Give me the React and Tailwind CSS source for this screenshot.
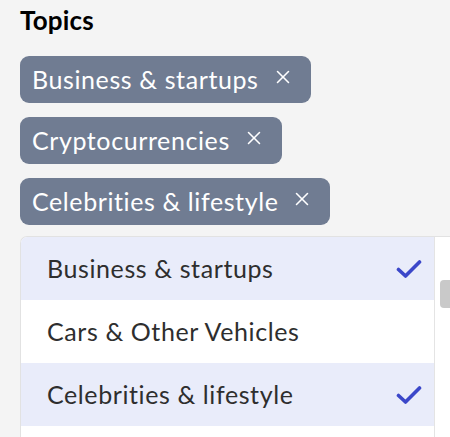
import { X } from "lucide-react";

const chips = ["Business & startups", "Cryptocurrencies", "Celebrities & lifestyle"];

const options = [
    { label: "Business & startups", selected: true },
    { label: "Cars & Other Vehicles", selected: false },
    { label: "Celebrities & lifestyle", selected: true },
];

function Check() {
    return (
        <svg width="26" height="20" viewBox="0 0 26 20" fill="none">
            <path
                d="M2.5 10.5 L9.5 17 L23.5 3"
                stroke="#3b47c9"
                strokeWidth="3.6"
                strokeLinecap="round"
                strokeLinejoin="round"
            />
        </svg>
    );
}

export default function App() {
    return (
        <main
            className="w-[450px] h-[437px] overflow-hidden bg-[#f4f4f4] pl-[20px] pt-[5px] [font-variant-ligatures:none]"
            style={{ fontFamily: "Lato, 'Noto Sans', sans-serif" }}
        >
            {/* heading */}
            <h2 className="text-[26px] leading-[31px] font-bold text-black tracking-[0.2px]">
                Topics
            </h2>

            {/* selected chips */}
            <div className="flex flex-col items-start gap-[14px] mt-[20px]">
                {chips.map((chip) => (
                    <div
                        key={chip}
                        className="flex items-center h-[47px] pl-[12px] pr-[17px] rounded-[9px] bg-[#707c92] text-white"
                    >
                        <span className="text-[25px] leading-none tracking-[0.6px]">{chip}</span>
                        <X className="ml-[13px] -mt-[5px]" size={22} strokeWidth={1.7} />
                    </div>
                ))}
            </div>

            {/* options list */}
            <div className="flex h-[220px] mt-[11px] rounded-tl-[7px] border-t border-l border-[#e2e2e2] bg-white overflow-hidden">
                <ul className="flex-1">
                    {options.map((opt) => (
                        <li
                            key={opt.label}
                            className={`flex items-center justify-between h-[63px] pl-[26px] pr-[12px] ${
                                opt.selected ? "bg-[#e9ecfa]" : "bg-white"
                            }`}
                        >
                            <span className="text-[25px] leading-none tracking-[0.6px] text-[#2e2e2e]">
                                {opt.label}
                            </span>
                            {opt.selected && <Check />}
                        </li>
                    ))}
                </ul>
                <div className="w-[16px] border-l border-[#e4e4e4] bg-white pt-[43px] pl-[5px]">
                    <div className="h-[28px] w-[11px] rounded-l-[4px] bg-[#c9c9c9]" />
                </div>
            </div>
        </main>
    );
}
